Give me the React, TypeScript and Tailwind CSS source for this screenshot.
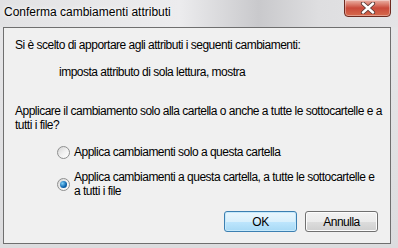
import type { ReactNode } from 'react'

const font = { fontFamily: '"Liberation Sans", Arial, sans-serif' }

function CloseButton() {
  return (
    <div className="w-[47px] h-[18px] -mt-px rounded-b-[4px] border border-[#6d2a20] bg-gradient-to-b from-[#eab3a8] via-[#c9493a] to-[#d66a4d] flex items-center justify-center shadow-[inset_0_0_0_1px_rgba(255,255,255,0.35)]">
      <svg width="16" height="12" viewBox="0 0 16 12">
        <path d="M3 1.5 L13 10.5 M13 1.5 L3 10.5" stroke="#5a3a36" strokeWidth="4.2" strokeLinecap="round" />
        <path d="M3 1.5 L13 10.5 M13 1.5 L3 10.5" stroke="#ffffff" strokeWidth="2.4" strokeLinecap="round" />
      </svg>
    </div>
  )
}

function Radio({ checked }: { checked?: boolean }) {
  return (
    <div className="w-[13px] h-[13px] rounded-full border border-[#8e8f8f] bg-gradient-to-br from-[#d4d4d4] via-[#f0f0f0] to-[#ffffff] flex items-center justify-center shrink-0">
      {checked && (
        <div className="w-[7px] h-[7px] rounded-full bg-[radial-gradient(circle_at_35%_35%,#7fd0f7,#0b63ad_60%,#0a3f78)]" />
      )}
    </div>
  )
}

function Button({ children, primary }: { children: ReactNode; primary?: boolean }) {
  return (
    <div
      className={`w-[73px] h-[21px] rounded-[3px] border flex items-center justify-center text-[12px] text-black ${
        primary
          ? 'border-[#3c7fb1] bg-[linear-gradient(#eaf6fd_0%,#d9f0fc_50%,#bee6fd_51%,#a7d9f5_100%)] shadow-[inset_0_0_0_1px_#c6e9fb]'
          : 'border-[#707070] bg-[linear-gradient(#f2f2f2_0%,#ebebeb_50%,#dddddd_51%,#cfcfcf_100%)] shadow-[inset_0_0_0_1px_#fcfcfc]'
      }`}
    >
      {children}
    </div>
  )
}

export default function App() {
  return (
    <div
      style={font}
      className="w-[398px] h-[248px] overflow-hidden flex flex-col bg-[linear-gradient(180deg,#d8d8da_0%,#e6e6e8_12%,#dcdcde_100%)]"
    >
      <div className="h-[27px] shrink-0 flex items-start justify-between pl-[4px] pr-[7px] bg-[linear-gradient(90deg,#e2e2e4_0%,#ececee_45%,#c9c9cc_65%,#dedee0_80%,#e4e4e6_100%)]">
        <span className="mt-[4px] text-[12px] leading-[16px] text-black [text-shadow:0_0_6px_#ffffff,0_0_3px_#ffffff]">
          Conferma cambiamenti attributi
        </span>
        <CloseButton />
      </div>

      <div className="ml-[3px] mr-[7px] h-[217px] border border-[#6f6f6f] bg-[#f0f0f0] flex flex-col text-[12px] leading-[14px] tracking-[-0.5px] text-black">
        <div className="pl-[11px] pt-[10px]">
          Si è scelto di apportare agli attributi i seguenti cambiamenti:
        </div>
        <div className="pl-[55px] pt-[13px]">imposta attributo di sola lettura, mostra</div>
        <div className="pl-[11px] pt-[25px] whitespace-nowrap">
          Applicare il cambiamento solo alla cartella o anche a tutte le sottocartelle e a
          <br />
          tutti i file?
        </div>

        <div className="pl-[53px] pt-[13px] flex items-center gap-[4px]">
          <Radio />
          <span>Applica cambiamenti solo a questa cartella</span>
        </div>

        <div className="pl-[53px] pt-[11px] flex items-center gap-[4px]">
          <Radio checked />
          <span className="whitespace-nowrap">
            Applica cambiamenti a questa cartella, a tutte le sottocartelle e
            <br />
            a tutti i file
          </span>
        </div>

        <div className="mt-[13px] flex justify-end gap-[8px] pr-[12px]">
          <Button primary>OK</Button>
          <Button>Annulla</Button>
        </div>
      </div>
    </div>
  )
}
